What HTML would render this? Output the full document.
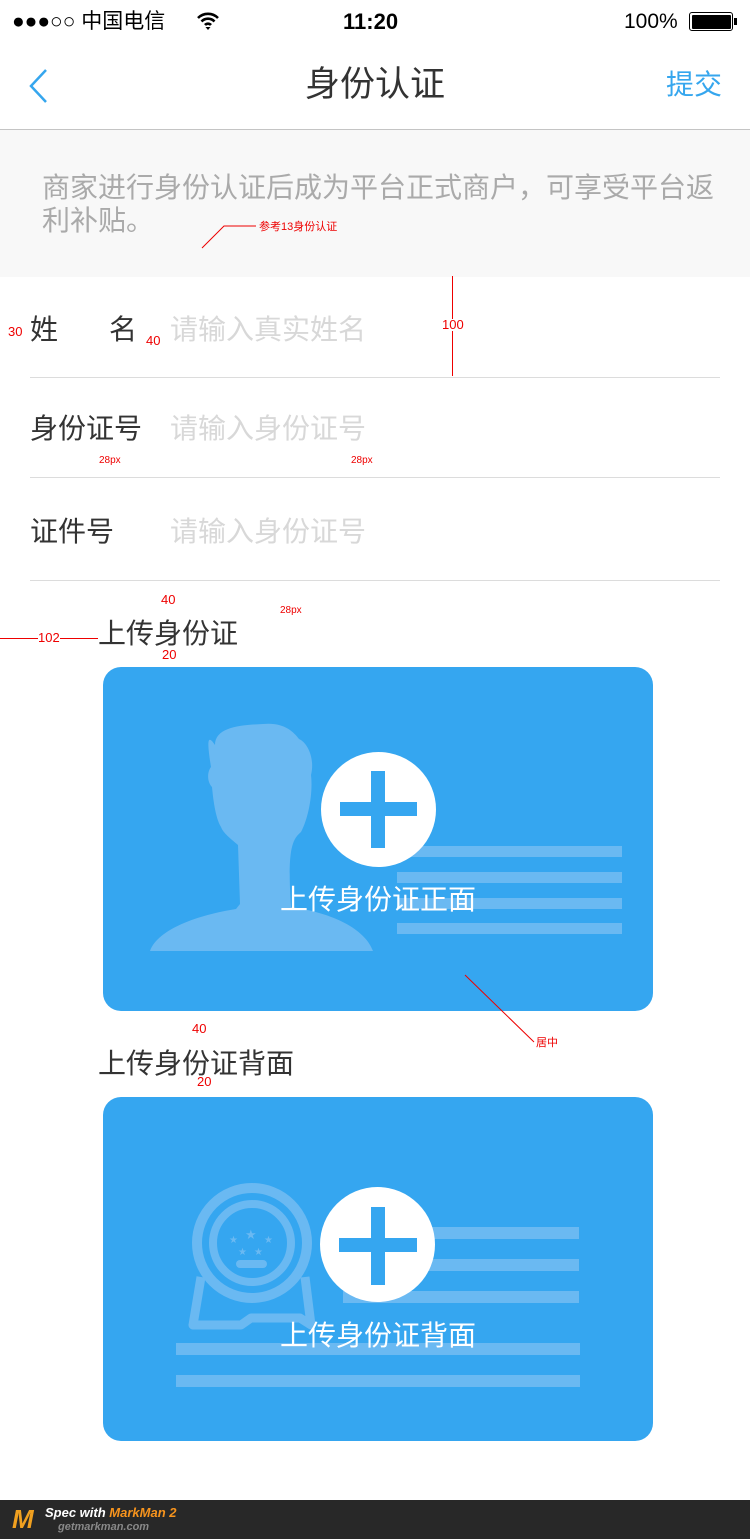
<!DOCTYPE html>
<html><head><meta charset="utf-8">
<style>
*{margin:0;padding:0;box-sizing:border-box}
body{width:750px;height:1539px;position:relative;background:#fff;font-family:"Liberation Sans","Noto Sans CJK SC",sans-serif;overflow:hidden}
.a{position:absolute;white-space:nowrap}
.t{font-size:28px;line-height:28px;color:#333}
.ph{font-size:28px;line-height:28px;color:#d8d8d8}
.hl{position:absolute;left:30px;width:690px;height:1px;background:#dcdcdc}
.red{color:#e00;font-size:11px;line-height:12px}
.card{position:absolute;left:103px;width:550px;height:344px;background:#35a6f0;border-radius:18px;overflow:hidden}
.bar{position:absolute;background:#6ab9f2}
.circ{position:absolute;width:115px;height:115px;border-radius:50%;background:#fff}
.ph1{position:absolute;background:#35a6f0}
.ct{position:absolute;width:550px;text-align:center;color:#fff;font-size:28px;line-height:28px}
</style></head><body>
<div class="a" style="left:12px;top:8px;font-size:21px;line-height:28px;color:#000">●●●○○ 中国电信</div>
<svg class="a" style="left:196px;top:11px" width="24" height="20" viewBox="0 0 24 20"><path d="M2 7a14 14 0 0 1 20 0M5.5 10.5a9 9 0 0 1 13 0M9 14a4 4 0 0 1 6 0" stroke="#000" stroke-width="2.6" fill="none"/><path d="M12 19l-2.5-3h5z" fill="#000"/></svg>
<div class="a" style="left:343px;top:8px;font-size:22px;line-height:28px;font-weight:bold;color:#000">11:20</div>
<div class="a" style="left:624px;top:8px;font-size:21px;line-height:28px;color:#000">100%</div>
<div class="a" style="left:689px;top:12px;width:44px;height:19px;border:1.5px solid #000;border-radius:3px;padding:1.5px"><div style="width:100%;height:100%;background:#000;border-radius:1px"></div></div>
<div class="a" style="left:734px;top:18px;width:3px;height:7px;background:#000"></div>
<svg class="a" style="left:28px;top:68px" width="22" height="36" viewBox="0 0 22 36"><path d="M18 2L3 18l15 16" stroke="#35a6ee" stroke-width="2.5" fill="none"/></svg>
<div class="a" style="left:0;width:750px;text-align:center;top:65px;font-size:35px;line-height:40px;color:#333">身份认证</div>
<div class="a" style="left:666px;top:68px;font-size:28px;line-height:34px;color:#35a6ee">提交</div>
<div class="a" style="left:0;top:129px;width:750px;height:1px;background:#c4c4c4"></div>
<div class="a" style="left:0;top:130px;width:750px;height:147px;background:#f8f8f8"></div>
<div class="a" style="left:42px;top:171px;width:675px;font-size:28px;line-height:33px;color:#aaa;white-space:normal">商家进行身份认证后成为平台正式商户，可享受平台返利补贴。</div>
<div class="a red" style="left:259px;top:221px">参考13身份认证</div>
<svg class="a" style="left:198px;top:222px" width="60" height="30"><path d="M58 4H26L4 26" stroke="#e00" fill="none"/></svg>
<div class="a t" style="left:30px;top:316px">姓</div>
<div class="a t" style="left:109px;top:316px">名</div>
<div class="a ph" style="left:170px;top:316px">请输入真实姓名</div>
<div class="hl" style="top:377px"></div>
<div class="a t" style="left:30px;top:415px">身份证号</div>
<div class="a ph" style="left:170px;top:415px">请输入身份证号</div>
<div class="hl" style="top:477px"></div>
<div class="a t" style="left:30px;top:518px">证件号</div>
<div class="a ph" style="left:170px;top:518px">请输入身份证号</div>
<div class="hl" style="top:580px"></div>
<div class="a red" style="left:8px;top:326px;font-size:13px">30</div>
<div class="a red" style="left:146px;top:335px;font-size:13px">40</div>
<div class="a" style="left:452px;top:276px;width:1px;height:100px;background:#e00"></div>
<div class="a red" style="left:442px;top:319px;font-size:13px;background:#fff">100</div>
<div class="a red" style="left:99px;top:455px;font-size:10px">28px</div>
<div class="a red" style="left:351px;top:455px;font-size:10px">28px</div>
<div class="a red" style="left:280px;top:605px;font-size:10px">28px</div>
<div class="a" style="left:0;top:638px;width:98px;height:1px;background:#e00"></div>
<div class="a red" style="left:38px;top:632px;font-size:13px;background:#fff">102</div>
<div class="a red" style="left:161px;top:594px;font-size:13px">40</div>
<div class="a red" style="left:162px;top:649px;font-size:13px">20</div>
<div class="a t" style="left:98px;top:620px">上传身份证</div>
<div class="card" style="top:667px">
 <svg class="a" style="left:0;top:0" width="550" height="344">
  <path d="M47 284C55 262 95 248 133 242L137 237 135 178C128 172 120 166 118 160 112 150 110 130 109 120 104 115 104 105 108 100 104 75 104 66 112 78 112 60 138 58 160 57 180 55 190 64 196 72 205 76 212 92 208 108 210 125 206 150 198 165 190 172 184 180 188 240C230 246 262 262 270 284Z" fill="#6ab9f2"/>
 </svg>
 <div class="bar" style="left:294px;top:179px;width:225px;height:11px"></div>
 <div class="bar" style="left:294px;top:205px;width:225px;height:11px"></div>
 <div class="bar" style="left:294px;top:231px;width:225px;height:11px"></div>
 <div class="bar" style="left:294px;top:256px;width:225px;height:11px"></div>
 <div class="circ" style="left:218px;top:85px"></div>
 <div class="ph1" style="left:237px;top:135px;width:77px;height:14px"></div>
 <div class="ph1" style="left:268px;top:104px;width:14px;height:77px"></div>
 <div class="ct" style="left:0;top:219px">上传身份证正面</div>
</div>
<div class="a red" style="left:536px;top:1037px">居中</div>
<svg class="a" style="left:462px;top:972px" width="76" height="72"><path d="M3 3L72 70" stroke="#e00" fill="none"/></svg>
<div class="a red" style="left:192px;top:1023px;font-size:13px">40</div>
<div class="a red" style="left:197px;top:1076px;font-size:13px">20</div>
<div class="a t" style="left:98px;top:1050px">上传身份证背面</div>
<div class="card" style="top:1097px">
 <div class="bar" style="left:240px;top:130px;width:236px;height:12px"></div>
 <div class="bar" style="left:240px;top:162px;width:236px;height:12px"></div>
 <div class="bar" style="left:240px;top:194px;width:236px;height:12px"></div>
 <div class="bar" style="left:73px;top:246px;width:404px;height:12px"></div>
 <div class="bar" style="left:73px;top:278px;width:404px;height:12px"></div>
 <svg class="a" style="left:0;top:0" width="550" height="344">
  <g stroke="#6ab9f2" fill="none">
   <circle cx="149" cy="146" r="55" stroke-width="10"/>
   <circle cx="149" cy="146" r="39" stroke-width="8"/>
   <path d="M98 180L90 228H138L148 221H197L208 228H208L202 180" stroke-width="9" stroke-linejoin="round"/>
   <path d="M137 167H160" stroke-width="8" stroke-linecap="round"/>
  </g>
  <g fill="#6ab9f2" font-size="13" font-family="DejaVu Sans">
   <text x="142" y="142">★</text><text x="126" y="146" font-size="10">★</text><text x="161" y="146" font-size="10">★</text><text x="135" y="158" font-size="10">★</text><text x="151" y="158" font-size="10">★</text>
  </g>
 </svg>
 <div class="circ" style="left:217px;top:90px"></div>
 <div class="ph1" style="left:236px;top:141px;width:78px;height:14px"></div>
 <div class="ph1" style="left:268px;top:110px;width:14px;height:78px"></div>
 <div class="ct" style="left:0;top:225px">上传身份证背面</div>
</div>
<div class="a" style="left:0;top:1500px;width:750px;height:39px;background:#282828"></div>
<div class="a" style="left:12px;top:1505px;font-size:26px;line-height:28px;font-weight:bold;font-style:italic;color:#f0a020">M</div>
<div class="a" style="left:45px;top:1506px;font-size:13px;line-height:14px;font-weight:bold;font-style:italic;color:#fff">Spec with <span style="color:#f7941d">MarkMan 2</span></div>
<div class="a" style="left:58px;top:1521px;font-size:11px;line-height:12px;font-weight:bold;font-style:italic;color:#888">getmarkman.com</div>
</body></html>
